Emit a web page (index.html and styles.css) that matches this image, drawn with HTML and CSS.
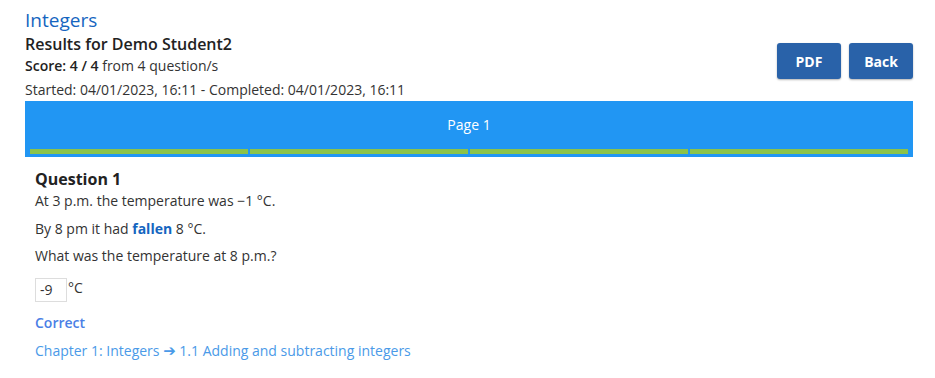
FILE: index.html
```html
<!DOCTYPE html>
<html>
<head>
<meta charset="utf-8">
<link rel="stylesheet" href="styles.css">
</head>
<body>
<div class="page">
  <div class="header">
    <div class="info">
      <div class="title">Integers</div>
      <div class="results">Results for Demo Student2</div>
      <div class="score"><span class="strong">Score: 4 / 4</span> from 4 question/s</div>
      <div class="times">Started: 04/01/2023, 16:11 - Completed: 04/01/2023, 16:11</div>
    </div>
    <div class="actions">
      <button class="btn">PDF</button>
      <button class="btn">Back</button>
    </div>
  </div>
  <div class="pagebar">
    <div class="pagelabel">Page 1</div>
    <div class="segments">
      <div class="seg"></div>
      <div class="seg"></div>
      <div class="seg"></div>
      <div class="seg"></div>
    </div>
  </div>
  <div class="question">
    <div class="qtitle">Question 1</div>
    <p class="qtext">At 3 p.m. the temperature was −1 °C.</p>
    <p class="qtext">By 8 pm it had <b class="hl">fallen</b> 8 °C.</p>
    <p class="qtext">What was the temperature at 8 p.m.?</p>
    <div class="answer">
      <span class="box">-9</span><span class="unit">°C</span>
    </div>
    <div class="correct">Correct</div>
    <div class="chapter">Chapter 1: Integers <span class="arrow">➔</span> 1.1 Adding and subtracting integers</div>
  </div>
</div>
</body>
</html>
```

FILE: styles.css
```css
* { box-sizing: border-box; }
body {
  margin: 0;
  background: #fff;
  font-family: "Open Sans", "DejaVu Sans", sans-serif;
  color: #333;
}
.page {
  width: 888px;
  margin-left: 25px;
  padding-top: 8px;
}
.header {
  display: flex;
  justify-content: space-between;
}
.title {
  font-size: 19px;
  line-height: 24px;
  color: #1565c0;
}
.results {
  font-size: 16px;
  line-height: 24px;
  font-weight: 600;
  color: #222;
}
.score {
  font-size: 14px;
  line-height: 20px;
  color: #333;
}
.score .strong {
  font-weight: 600;
  color: #222;
}
.times {
  font-size: 14px;
  line-height: 20px;
  margin-top: 4px;
  color: #333;
}
.actions {
  display: flex;
  gap: 8px;
  margin-top: 35px;
  align-self: flex-start;
}
.btn {
  width: 64px;
  height: 36px;
  border: none;
  border-radius: 3px;
  background: #2962a9;
  color: #fff;
  font-family: "Open Sans", sans-serif;
  font-weight: 700;
  font-size: 14px;
  box-shadow: 0 1px 2px rgba(0,0,0,0.3);
  padding: 0;
}
.pagebar {
  margin-top: 1px;
  background: #2196f3;
  padding: 0 5px 3px;
}
.pagelabel {
  text-align: center;
  color: #fff;
  font-size: 14px;
  line-height: 48px;
}
.segments {
  display: flex;
  gap: 2px;
}
.seg {
  flex: 1;
  height: 5px;
  background: #8bc34a;
}
.question {
  padding-left: 10px;
}
.qtitle {
  margin-top: 11px;
  font-size: 16px;
  line-height: 22px;
  font-weight: 700;
  color: #222;
}
.qtext {
  margin: 1px 0 0;
  font-size: 14px;
  line-height: 20px;
  color: #333;
}
.qtext + .qtext {
  margin-top: 7.5px;
}
.hl {
  color: #1565c0;
  font-weight: 700;
}
.answer {
  margin-top: 12px;
  display: flex;
  align-items: flex-start;
  font-size: 14px;
}
.box {
  width: 32px;
  height: 24px;
  border: 1px solid #ddd;
  padding-left: 4px;
  line-height: 22px;
  color: #333;
}
.unit {
  margin-left: 1px;
  line-height: 20px;
  color: #333;
}
.correct {
  margin-top: 11px;
  font-size: 14px;
  line-height: 20px;
  font-weight: 600;
  color: #4a7fe6;
}
.chapter {
  margin-top: 8px;
  font-size: 14px;
  line-height: 20px;
  color: #4a9ae8;
}
.arrow {
  font-family: "DejaVu Sans", sans-serif;
  font-size: 15px;
}
```
